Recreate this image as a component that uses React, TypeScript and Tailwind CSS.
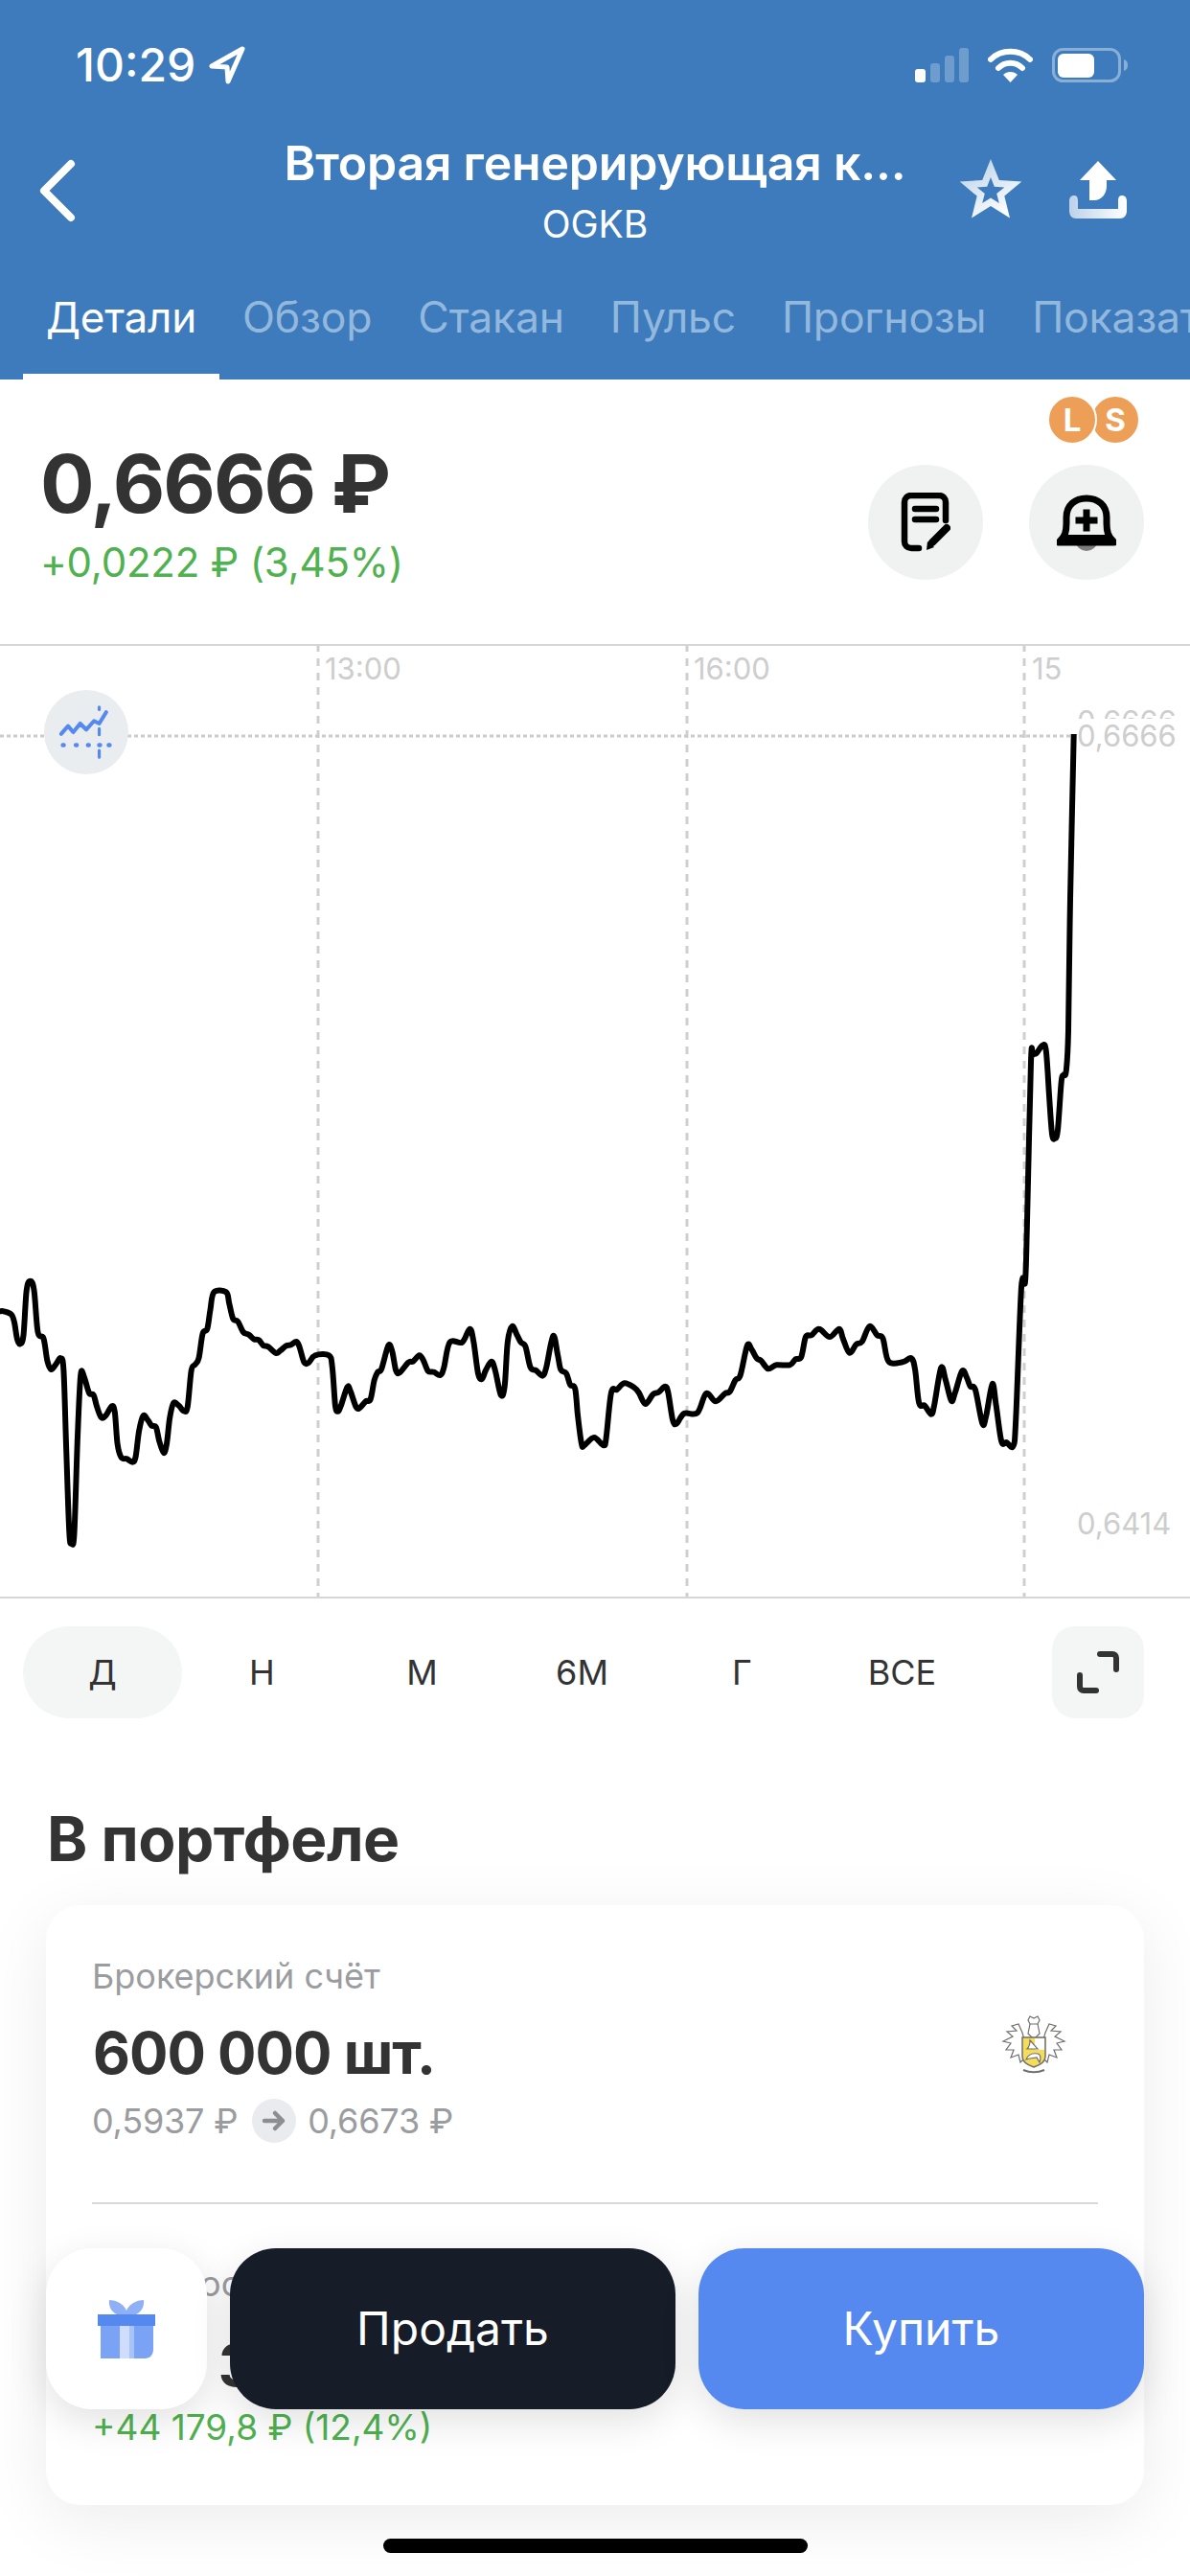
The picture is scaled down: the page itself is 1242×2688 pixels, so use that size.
import React from "react";

const Z3: number[][] = [[0,265],[10,265],[30,275],[38,300],[45,350],[53,367],[62,340],[70,200],[80,170],[90,200],[100,330],[115,350],[125,420],[135,447],[148,430],[160,412],[168,450],[175,700],[183,960],[189,988],[196,960],[205,650],[213,465],[222,470],[235,520],[247,527],[255,560],[267,597],[280,590],[295,562],[303,580],[310,680],[320,722],[335,727],[350,737],[358,720],[367,640],[378,592],[390,605],[400,623],[412,628],[420,670],[432,708],[440,680],[448,600],[458,552],[472,560],[485,577],[495,565],[505,450],[515,432],[525,410],[535,335],[547,320],[555,260],[565,205],[597,205],[605,240],[615,288],[628,297],[642,330],[657,338],[670,352],[683,355],[695,372],[708,376],[728,396],[740,388],[755,373],[768,370],[782,360],[790,375],[803,425],[815,425],[832,403],[868,403],[877,440],[885,560],[892,578],[900,560],[917,502],[925,515],[940,565],[950,567],[965,547],[978,540],[988,480],[997,455],[1007,445],[1025,372],[1035,390],[1045,450],[1055,457],[1078,425],[1090,422],[1107,403],[1118,420],[1130,452],[1145,455],[1162,465],[1172,440],[1187,362],[1220,362],[1240,320],[1250,360],[1262,460],[1272,477],[1282,450],[1297,422],[1307,450],[1322,527],[1332,500],[1340,360],[1352,312],[1365,340],[1375,362],[1387,375],[1400,440],[1415,450],[1432,467],[1442,440],[1460,342],[1472,400],[1480,447],[1495,460],[1505,495],[1518,507],[1525,590],[1535,680],[1542,685],[1568,660]];
const Z4: number[][] = [[25,685],[32,660],[45,520],[60,510],[80,490],[105,503],[118,520],[135,555],[155,525],[170,518],[187,500],[195,520],[207,605],[217,617],[237,585],[272,583],[295,522],[320,547],[345,522],[357,517],[372,480],[385,465],[403,372],[415,385],[428,412],[440,420],[458,445],[480,433],[515,433],[530,415],[545,408],[557,345],[572,340],[592,320],[620,345],[645,320],[655,350],[672,395],[690,368],[705,360],[725,312],[745,340],[760,350],[775,422],[812,424],[835,412],[845,450],[855,552],[870,560],[887,587],[895,560],[913,442],[925,480],[940,545],[950,520],[968,452],[980,470],[990,500],[1003,510],[1022,617],[1032,590],[1048,492],[1058,560],[1072,672],[1085,675],[1103,687],[1110,600]];
const RISE: number[][] = [[1066,1343],[1070,1337],[1072,1274],[1076,1108],[1078,1100.6],[1081.7,1099],[1088,1091],[1091.7,1096],[1095,1143],[1098,1183],[1101,1188],[1104,1179],[1107.7,1129],[1110,1121.6],[1112.7,1118],[1115,1076],[1117,938],[1120.7,766]];

const points: number[][] = [
  ...Z3.map(([x, y]) => [x / 2.529, 1280 + y / 3]),
  ...Z4.map(([x, y]) => [620 + x / 2.521, 1280 + y / 3]),
  ...RISE,
];

function smoothPath(p: number[][]) {
  let d = `M${p[0][0].toFixed(1)} ${p[0][1].toFixed(1)}`;
  for (let i = 0; i < p.length - 1; i++) {
    const a = p[Math.max(0, i - 1)];
    const b = p[i];
    const c = p[i + 1];
    const e = p[Math.min(p.length - 1, i + 2)];
    const c1x = b[0] + (c[0] - a[0]) / 6;
    const c1y = b[1] + (c[1] - a[1]) / 6;
    const c2x = c[0] - (e[0] - b[0]) / 6;
    const c2y = c[1] - (e[1] - b[1]) / 6;
    d += `C${c1x.toFixed(1)} ${c1y.toFixed(1)} ${c2x.toFixed(1)} ${c2y.toFixed(1)} ${c[0].toFixed(1)} ${c[1].toFixed(1)}`;
  }
  return d;
}

function StatusBar() {
  return (
    <div className="flex h-[136px] items-center justify-between pl-[79px] pr-[64px]">
      <div className="flex items-center gap-[14px]">
        <span className="text-[48px] leading-none font-medium text-white">10:29</span>
        <svg width="38" height="40" viewBox="0 0 38 40" fill="none">
          <path d="M35 3 L3 21 L19 22 L20 37 Z" stroke="#fff" strokeWidth="5" strokeLinejoin="round" />
        </svg>
      </div>
      <div className="flex items-center">
        <svg width="56" height="36" viewBox="0 0 56 36" className="mr-[20px]">
          <rect x="0" y="22" width="11" height="14" rx="3" fill="#fff" />
          <rect x="16" y="16" width="10" height="20" rx="3" fill="#fff" fillOpacity=".25" />
          <rect x="31" y="8" width="10" height="28" rx="3" fill="#fff" fillOpacity=".25" />
          <rect x="46" y="0" width="10" height="36" rx="3" fill="#fff" fillOpacity=".25" />
        </svg>
        <svg width="47" height="36" viewBox="0 0 47 36" fill="none" className="mr-[20px]">
          <path d="M3 12 C14 1 33 1 44 12" stroke="#fff" strokeWidth="6" strokeLinecap="round" />
          <path d="M11 21 C18 14 29 14 36 21" stroke="#fff" strokeWidth="6" strokeLinecap="round" />
          <path d="M23.5 36 L16 28 C20 24 27 24 31 28 Z" fill="#fff" />
        </svg>
        <svg width="80" height="36" viewBox="0 0 80 36" fill="none">
          <rect x="1.5" y="1.5" width="69" height="33" rx="10" stroke="#fff" strokeOpacity=".4" strokeWidth="3" />
          <rect x="6" y="6" width="38" height="25" rx="6" fill="#fff" />
          <path d="M75 12 C78 13 79 15 79 18 C79 21 78 23 75 24 Z" fill="#fff" fillOpacity=".4" />
        </svg>
      </div>
    </div>
  );
}

function NavBar() {
  return (
    <div className="grid h-[126px] grid-cols-[1fr_auto_1fr] items-center">
      <div className="flex justify-start pl-[40px]">
        <svg width="40" height="66" viewBox="0 0 40 66" fill="none">
          <path d="M34 5 L6 33 L34 61" stroke="#fff" strokeWidth="8" strokeLinecap="round" strokeLinejoin="round" />
        </svg>
      </div>
      <div className="flex flex-col items-center text-white">
        <div className="text-[50px] leading-[56px] font-semibold tracking-[-0.2px]">Вторая генерирующая к...</div>
        <div className="mt-[14px] text-[39px] leading-[44px] font-normal">OGKB</div>
      </div>
      <div className="flex items-center justify-end gap-[48px] pr-[66px]">
        <svg width="68" height="64" viewBox="0 0 68 64" className="mt-[-4px]">
          <defs>
            <linearGradient id="star" x1="0.1" y1="0" x2="0.7" y2="1">
              <stop offset="0" stopColor="#b9d0e8" />
              <stop offset="1" stopColor="#ffffff" />
            </linearGradient>
          </defs>
          <path
            fillRule="evenodd"
            fill="url(#star)"
            d="M34 1 L42.8 22.9 L66.3 24.5 L48.3 39.6 L54 62.5 L34 50 L14 62.5 L19.700 39.6 L1.7 24.5 L25.2 22.9 Z M34 20 L30.2 29.7 L19.7 30.4 L27.8 37 L25.2 47.1 L34 41.5 L42.8 47.1 L40.2 37 L48.3 30.4 L37.8 29.7 Z"
          />
        </svg>
        <svg width="60" height="60" viewBox="0 0 60 60" className="mt-[-2px]">
          <defs>
            <linearGradient id="tray" x1="0" y1="0" x2="1" y2="0">
              <stop offset="0" stopColor="#bcd2e9" />
              <stop offset="1" stopColor="#ffffff" />
            </linearGradient>
          </defs>
          <path d="M30 0 L49 20 L39 20 L39 26 C39 34 34 41 26 41 L21 41 L21 20 L11 20 Z" fill="#fff" />
          <path d="M0 42 C0 38 2 36 5 36 C8 36 9 38 9 42 L9 50 L51 50 L51 42 C51 38 52 36 55 36 C58 36 60 38 60 42 L60 52 C60 57 57 60 53 60 L7 60 C3 60 0 57 0 52 Z" fill="url(#tray)" />
        </svg>
      </div>
    </div>
  );
}

const tabs = ["Обзор", "Стакан", "Пульс", "Прогнозы", "Показатели"];

function Tabs() {
  return (
    <div className="mt-auto flex h-[130px] overflow-hidden whitespace-nowrap pl-[24px]">
      <div className="flex items-center border-b-[6px] border-white px-[24px] pt-[6px] text-[44px] tracking-[-0.2px] text-white">Детали</div>
      {tabs.map((t) => (
        <div key={t} className="flex items-center border-b-[6px] border-transparent px-[24px] pt-[6px] text-[44.5px] tracking-[-0.2px] text-[#93b8dd]">
          {t}
        </div>
      ))}
    </div>
  );
}

function NoteIcon() {
  return (
    <svg width="52" height="62" viewBox="0 0 52 62" fill="none">
      <path d="M47 29 V10 C47 6 44 3 40 3 H11 C7 3 4 6 4 10 V51 C4 55 7 58 11 58 H19" stroke="#000" strokeWidth="6.5" strokeLinecap="round" />
      <path d="M15 17 H37 M15 28 H37" stroke="#000" strokeWidth="6.5" strokeLinecap="round" />
      <path d="M33 52 L48 37" stroke="#000" strokeWidth="8" strokeLinecap="round" />
      <path d="M27 60 L28 51 L35 57 Z" fill="#000" />
    </svg>
  );
}

function BellIcon() {
  return (
    <svg width="62" height="62" viewBox="0 0 62 62" fill="none">
      <ellipse cx="31" cy="51" rx="11" ry="10" fill="#7d7d7d" />
      <path d="M2 52 H60 C53 46 52 40 52 32 V26 C52 13 43 6 31 6 C19 6 10 13 10 26 V32 C10 40 9 46 2 52 Z" fill="#eff1f1" stroke="#000" strokeWidth="7" strokeLinejoin="round" />
      <path d="M2 52 H60 C57 49 55 47 54 44 H8 C7 47 5 49 2 52 Z" fill="#000" />
      <path d="M31 17.500 V40.500 M19.500 29 H42.500" stroke="#000" strokeWidth="7" />
    </svg>
  );
}

function PriceBlock() {
  return (
    <div className="flex h-[276px] items-start justify-between pl-[42px] pr-[48px]">
      <div className="pt-[59px]">
        <div className="text-[84px] leading-[100px] font-bold tracking-[-2px] text-[#333333]">0,6666 ₽</div>
        <div className="mt-[4px] text-[42px] leading-[56px] tracking-[-0.2px] text-[#4fb14f]">+0,0222 ₽ (3,45%)</div>
      </div>
      <div className="mt-[89px] flex gap-[48px]">
        <div className="flex h-[120px] w-[120px] items-center justify-center rounded-full bg-[#f0f2f2]">
          <NoteIcon />
        </div>
        <div className="relative flex h-[120px] w-[120px] items-center justify-center rounded-full bg-[#f0f2f2]">
          <BellIcon />
          <div className="absolute left-[19px] top-[-73px] flex">
            <div className="z-10 flex h-[52px] w-[52px] items-center justify-center rounded-full border-[2px] border-white bg-[#ee9f57] text-[33px] leading-none font-bold text-white">L</div>
            <div className="-ml-[5px] mt-[2px] flex h-[48px] w-[48px] items-center justify-center rounded-full bg-[#ee9f57] text-[33px] leading-none font-bold text-white">S</div>
          </div>
        </div>
      </div>
    </div>
  );
}

function Chart() {
  return (
    <div className="relative h-[996px] overflow-hidden border-y-2 border-[#d6d6d6]">
      <svg className="absolute left-0 top-[-2px]" width="1242" height="996" viewBox="0 672 1242 996" fill="none">
        <path d="M332 672 V1666 M717 672 V1666 M1069 672 V1666" stroke="#cfcfcf" strokeWidth="3" strokeDasharray="8 7" />
        <path d="M0 768 H1122" stroke="#cbcbcb" strokeWidth="3" strokeDasharray="4 3" />
        <path d={smoothPath(points)} stroke="#000" strokeWidth="6" strokeLinejoin="round" strokeLinecap="butt" />
      </svg>
      <span className="absolute left-[339px] top-[6px] text-[31px] leading-[36px] text-[#cdcdcd]">13:00</span>
      <span className="absolute left-[724px] top-[6px] text-[31px] leading-[36px] text-[#cdcdcd]">16:00</span>
      <span className="absolute left-[1077px] top-[6px] w-[33px] overflow-hidden text-[31px] leading-[36px] text-[#cdcdcd]">15:00</span>
      <span className="absolute left-[1124px] top-[61px] text-[31px] leading-[36px] text-[#cdcdcd]">0,6666</span>
      <span className="absolute left-[1124px] top-[76px] bg-white text-[31px] leading-[36px] text-[#cdcdcd]">0,6666</span>
      <span className="absolute left-[1124px] top-[898px] text-[31px] leading-[36px] text-[#cdcdcd]">0,6414</span>
      <div className="absolute left-[46px] top-[46px] flex h-[88px] w-[88px] items-center justify-center rounded-full bg-[#e9edf0]">
        <svg width="56" height="56" viewBox="0 0 62 62" fill="none">
          <path d="M2 33 L10 24 L16 31 L24 21 L31 28 L40 18 L46 21 L54 8" stroke="#5589ef" strokeWidth="4.500" strokeLinejoin="round" strokeLinecap="round" />
          <path d="M46 2 V5" stroke="#5589ef" strokeWidth="3.500" strokeLinecap="round" />
          <path d="M46 27 V34 M46 52 V60" stroke="#5589ef" strokeWidth="3.500" strokeLinecap="round" />
          <path d="M4 46 H5 M19 46 H20 M33 46 H34 M46 46 H47 M57 46 H58" stroke="#5589ef" strokeWidth="5" strokeLinecap="round" />
        </svg>
      </div>
    </div>
  );
}

const ranges = ["Д", "Н", "М", "6М", "Г", "ВСЕ"];

function Ranges() {
  return (
    <div className="flex items-center pl-[24px] pr-[48px] pt-[29px]">
      {ranges.map((r, i) => (
        <div
          key={r}
          className={
            i === 0
              ? "flex h-[96px] w-[166px] items-center justify-center rounded-[48px] bg-[#f4f6f6] text-[36px] text-[#333333]"
              : "flex h-[96px] w-[167px] items-center justify-center text-[36px] text-[#333333]"
          }
        >
          {r}
        </div>
      ))}
      <div className="ml-auto flex h-[96px] w-[96px] items-center justify-center rounded-[24px] bg-[#f4f6f6]">
        <svg width="44" height="44" viewBox="0 0 44 44" fill="none">
          <path d="M24 3 H37 C39.500 3 41 4.500 41 7 V19 M20 41 H7 C4.500 41 3 39.500 3 37 V25" stroke="#333" strokeWidth="6" strokeLinecap="round" />
        </svg>
      </div>
    </div>
  );
}

function TinkoffLogo() {
  return (
    <svg width="68" height="62" viewBox="0 0 68 62" fill="none" stroke="#6f6f6f" strokeWidth="1.200">
      <path d="M28 6 L30 2 L34 4 L38 2 L40 6 L38 10 H30 Z" />
      <path d="M30 10 L28 20 L34 26 L40 20 L38 10" />
      <path d="M22 19 L18 10 L11 12 L16 17 L6 18 L12 23 L2 28 L10 30 L5 37 L13 37 L10 45 L18 42 L20 50 L24 46 V26 Z" fill="#fff" />
      <path d="M46 19 L50 10 L57 12 L52 17 L62 18 L56 23 L66 28 L58 30 L63 37 L55 37 L58 45 L50 42 L48 50 L44 46 V26 Z" fill="#fff" />
      <path d="M22 24 H46 V44 C46 50 40 53 34 55 C28 53 22 50 22 44 Z" fill="#f5dc5a" strokeWidth="1.500" />
      <path d="M35 25 H45 V37 H35 Z" fill="#fff" stroke="none" />
      <path d="M27 36 C30 33 30 28 30 27 C33 30 36 34 38 36 Z" fill="#fff" />
      <path d="M26 47 C28 42 32 40 38 41 C42 42 41 47 40 50 L37 45 L30 46 Z" fill="#fff" />
      <path d="M23 58 C30 61 38 61 45 58" strokeWidth="2" />
    </svg>
  );
}

function Card() {
  return (
    <div className="mx-[48px] mt-[33px] h-[626px] rounded-[36px] bg-white px-[48px] pt-[54px] shadow-[0_16px_70px_rgba(0,0,0,0.08)]">
      <div className="flex items-center justify-between pr-[33px]">
        <div>
          <div className="text-[36px] leading-[40px] text-[#9a9ca0]">Брокерский счёт</div>
          <div className="mt-[24px] pl-[1px] text-[60px] leading-[72px] font-bold tracking-[-1px] text-[#333333]">600 000 шт.</div>
          <div className="mt-[12px] flex items-center text-[36px] leading-[46px] tracking-[-0.2px] text-[#9a9ca0]">
            <span>0,5937 ₽</span>
            <span className="ml-[15px] mr-[12px] flex h-[46px] w-[46px] items-center justify-center rounded-full bg-[#e9ebee]">
              <svg width="26" height="24" viewBox="0 0 26 24" fill="none">
                <path d="M3 12 H22 M14 4 L22 12 L14 20" stroke="#8c8e92" strokeWidth="4.500" strokeLinecap="round" strokeLinejoin="round" />
              </svg>
            </span>
            <span>0,6673 ₽</span>
          </div>
        </div>
        <div className="-mt-[12px]">
          <TinkoffLogo />
        </div>
      </div>
      <div className="mt-[62px] h-[2px] bg-[#d9d9d9]" />
      <div className="mt-[63px] text-[36px] leading-[40px] text-[#9a9ca0]">Стоимость</div>
      <div className="mt-[29px] text-[60px] leading-[72px] font-bold tracking-[-1px] text-[#333333]">400 380 ₽</div>
      <div className="mt-[6px] text-[37px] leading-[46px] text-[#4fb14f]">+44 179,8 ₽ (12,4%)</div>
    </div>
  );
}

function FloatingBar() {
  return (
    <div className="absolute left-[48px] top-[2346px] flex h-[168px] w-[1146px] gap-[24px]">
      <div className="flex h-full w-[168px] items-center justify-center rounded-[48px] bg-white shadow-[0_12px_40px_rgba(0,0,0,0.12)]">
        <svg width="62" height="62" viewBox="0 0 62 62">
          <path d="M13 1 C18 1 28 4 31 12 C34 4 44 1 49 1 C50 8 46 14 41 16 H21 C16 14 12 8 13 1 Z" fill="#8fb0f7" />
          <path d="M4 26 H59 V52 C59 58 56 62 50 62 H4 Z" fill="#7ba3f5" />
          <rect x="24" y="26" width="10" height="36" fill="#cfdcfb" />
          <rect x="34" y="26" width="5" height="36" fill="#a9c2f8" />
          <rect x="1" y="16" width="60" height="12" fill="#5589ef" />
        </svg>
      </div>
      <div className="flex h-full flex-1 items-center justify-center rounded-[48px] bg-[#161d29] text-[48px] text-white shadow-[0_12px_40px_rgba(0,0,0,0.12)]">Продать</div>
      <div className="flex h-full flex-1 items-center justify-center rounded-[48px] bg-[#5589ef] text-[48px] text-white shadow-[0_12px_40px_rgba(0,0,0,0.12)]">Купить</div>
    </div>
  );
}

export default function App() {
  return (
    <div className="relative h-[2688px] w-[1242px] overflow-hidden bg-white font-['Inter','Noto_Sans',sans-serif]">
      <div className="flex h-[396px] flex-col bg-[#3d7bbc]">
        <StatusBar />
        <NavBar />
        <Tabs />
      </div>
      <PriceBlock />
      <Chart />
      <Ranges />
      <div className="mt-[90px] pl-[49px] text-[64px] leading-[72px] font-bold tracking-[-0.5px] text-[#333333]">В портфеле</div>
      <Card />
      <FloatingBar />
      <div className="absolute left-[400px] top-[2649px] h-[15px] w-[443px] rounded-full bg-black" />
    </div>
  );
}
